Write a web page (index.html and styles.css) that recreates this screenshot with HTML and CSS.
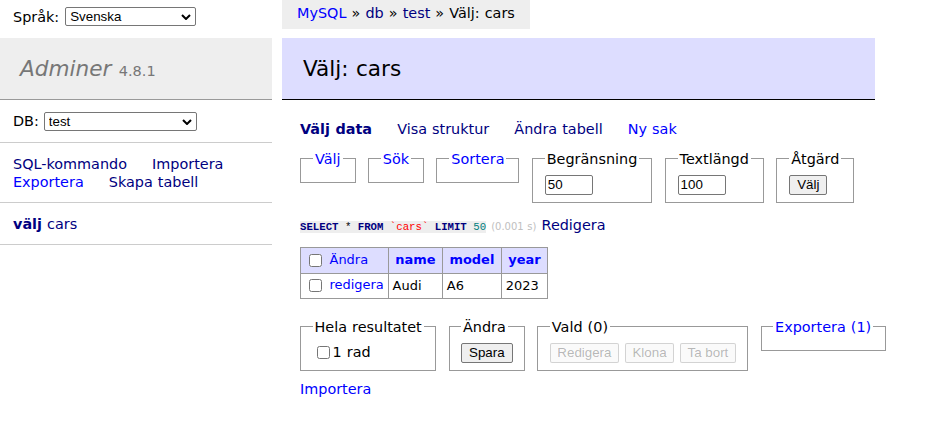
FILE: index.html
```html
<!DOCTYPE html>
<html lang="sv">
<head>
<meta charset="utf-8">
<title>Välj: cars - Adminer</title>
<link rel="stylesheet" href="styles.css">
</head>
<body>
<div class="page">
  <aside class="sidebar">
    <form class="lang">
      <span>Språk:</span>
      <span class="sel lang-select">
        <select><option>Svenska</option></select>
        <svg class="chev" width="10" height="6" viewBox="0 0 10 6"><path d="M1 1 L5 5 L9 1" fill="none" stroke="#000" stroke-width="2"/></svg>
      </span>
    </form>
    <div class="menu">
      <h1><a class="h1link" href="#">Adminer</a> <span class="version">4.8.1</span></h1>
      <form class="dbs">
        <span>DB:</span>
        <span class="sel db-select">
          <select><option>test</option></select>
          <svg class="chev" width="10" height="6" viewBox="0 0 10 6"><path d="M1 1 L5 5 L9 1" fill="none" stroke="#000" stroke-width="2"/></svg>
        </span>
      </form>
      <p class="menu-links"><a class="v" href="#">SQL-kommando</a> <a class="v" href="#">Importera</a> <a href="#">Exportera</a> <a class="v" href="#">Skapa tabell</a></p>
      <ul class="tables">
        <li><a class="v active" href="#">välj</a> <a class="v" href="#">cars</a></li>
      </ul>
    </div>
  </aside>

  <main class="main">
    <div class="crumb-row"><div class="breadcrumb"><a href="#">MySQL</a> » <a class="v" href="#">db</a> » <a class="v" href="#">test</a> » Välj: cars</div></div>
    <h2>Välj: cars</h2>
    <div class="content">
      <p class="tabs"><a class="v active" href="#">Välj data</a> <a class="v" href="#">Visa struktur</a> <a class="v" href="#">Ändra tabell</a> <a href="#">Ny sak</a></p>

      <form class="filters">
        <fieldset><legend><a href="#">Välj</a></legend></fieldset>
        <fieldset><legend><a href="#">Sök</a></legend></fieldset>
        <fieldset><legend><a href="#">Sortera</a></legend></fieldset>
        <fieldset><legend>Begränsning</legend><div><input class="size" type="text" value="50"></div></fieldset>
        <fieldset><legend>Textlängd</legend><div><input class="size" type="text" value="100"></div></fieldset>
        <fieldset><legend>Åtgärd</legend><div><button class="btn" type="button">Välj</button></div></fieldset>
      </form>

      <p class="query"><code class="sql"><b>SELECT</b> * <b>FROM</b> <span class="bac">`cars`</span> <b>LIMIT</b> <span class="num">50</span></code> <span class="time">(0.001 s)</span> <a class="v" href="#">Redigera</a></p>

      <table class="data">
        <thead>
          <tr><td><input type="checkbox"> <a href="#">Ändra</a></td><th><a href="#">name</a></th><th><a href="#">model</a></th><th><a href="#">year</a></th></tr>
        </thead>
        <tbody>
          <tr><td><input type="checkbox"> <a href="#">redigera</a></td><td>Audi</td><td>A6</td><td>2023</td></tr>
        </tbody>
      </table>

      <div class="footer">
        <fieldset><legend>Hela resultatet</legend><label><input type="checkbox">1 rad</label></fieldset>
        <fieldset><legend>Ändra</legend><div><button class="btn" type="button">Spara</button></div></fieldset>
        <fieldset><legend>Vald (0)</legend><div class="btns"><button class="btn small" type="button" disabled>Redigera</button><button class="btn small" type="button" disabled>Klona</button><button class="btn small" type="button" disabled>Ta bort</button></div></fieldset>
        <fieldset><legend><a href="#">Exportera</a> <a href="#">(1)</a></legend></fieldset>
      </div>
      <div class="import"><a href="#">Importera</a></div>
    </div>
  </main>
</div>
</body>
</html>
```

FILE: styles.css
```css
body {
  margin: 0;
  font: 14.4px/1.25 "DejaVu Sans", Verdana, sans-serif;
  word-spacing: 0.5px;
  color: #000;
  background: #fff;
}
a { color: blue; text-decoration: none; }
a.v { color: navy; }
.active { font-weight: bold; }

.page {
  display: grid;
  grid-template-columns: 282px 1fr;
  align-items: start;
}

/* sidebar */
.sidebar { width: 272px; }
.lang {
  display: flex;
  align-items: center;
  gap: 6px;
  height: 33px;
  padding: 0 13px;
  margin: 0 0 5px;
}
.sel { position: relative; display: inline-block; }
.sel select {
  -webkit-appearance: none;
  appearance: none;
  display: block;
  height: 19px;
  margin: 0;
  padding: 0 0 0 4px;
  font: 13.33px "Liberation Sans", Arial, sans-serif;
  word-spacing: normal;
  color: #000;
  background: #fff;
  border: 1px solid #767676;
  border-radius: 2px;
}
.sel .chev {
  position: absolute;
  right: 5px;
  top: 7px;
  pointer-events: none;
}
.lang-select select { width: 131px; }
.db-select select { width: 153px; }

h1 {
  margin: 0;
  padding: 17px 20px;
  font-size: 21.6px;
  line-height: 27px;
  font-weight: normal;
  color: #777;
  background: #eee;
  border-bottom: 1px solid #999;
}
.h1link { color: #777; font-style: italic; }
.version { font-size: 14.5px; line-height: 1; color: #777; }

.dbs {
  display: flex;
  align-items: center;
  gap: 5px;
  height: 42px;
  margin: 0;
  padding: 0 13px;
  border-bottom: 1px solid #ccc;
}
.menu-links {
  margin: 0;
  padding: 11.5px 13px;
  border-bottom: 1px solid #ccc;
}
.menu-links a { margin-right: 20px; white-space: nowrap; }
.tables {
  margin: 0;
  padding: 11.5px 13px;
  list-style: none;
  border-bottom: 1px solid #ccc;
  white-space: nowrap;
}

/* main */
.crumb-row { height: 29px; }
.breadcrumb {
  display: inline-block;
  height: 29px;
  line-height: 26px;
  padding: 0 15px;
  background: #eee;
  white-space: nowrap;
}
h2 {
  width: 593px;
  box-sizing: border-box;
  margin: 9px 0 20px;
  padding: 17px 21px;
  font-size: 21.6px;
  line-height: 27px;
  font-weight: normal;
  color: #000;
  background: #ddf;
  border-bottom: 1px solid #000;
}
.content { padding-left: 18px; }
.tabs { margin: 0; }
.tabs a { margin-right: 20px; white-space: nowrap; }

.filters, .footer { margin: 0; }
fieldset {
  display: inline-block;
  vertical-align: top;
  min-width: 0;
  margin: 11.5px 7.2px 0 0;
  padding: 7.2px 12px;
  border: 1px solid #999;
}
legend { padding: 0 2px; }
.size {
  box-sizing: border-box;
  width: 48px;
  height: 20px;
  margin: 0;
  padding: 1px 2px;
  vertical-align: middle;
  font: 13.33px "Liberation Sans", Arial, sans-serif;
  color: #000;
  border: 1px solid #767676;
  border-radius: 2px;
  background: #fff;
}
.btn {
  box-sizing: border-box;
  height: 20px;
  margin: 0;
  padding: 1px 7px;
  vertical-align: middle;
  font: 13.33px "Liberation Sans", Arial, sans-serif;
  word-spacing: normal;
  color: #000;
  background: #efefef;
  border: 1px solid #767676;
  border-radius: 2px;
}
.btn.small { padding: 1px 6.5px; }
.btns { display: flex; gap: 6px; }
.btn:disabled {
  color: rgba(16, 16, 16, 0.3);
  background: rgba(239, 239, 239, 0.3);
  border-color: rgba(118, 118, 118, 0.3);
}
input[type="checkbox"] { vertical-align: middle; margin: 3px 3px 3px 4px; }

.query { margin: 13px 0 0; }
.sql {
  font: 10.7px "Liberation Mono", "Courier New", monospace;
  word-spacing: normal;
  background: #eee;
}
.sql b { color: navy; }
.sql .bac { color: red; }
.sql .num { color: #007f7f; }
.time { color: silver; font-size: 10px; }

.data {
  margin: 13.5px 0 0;
  border-collapse: collapse;
  font-size: 12.96px;
}
.data td, .data th {
  border: 1px solid #999;
  padding: 2.6px 3.9px;
  text-align: left;
  white-space: pre;
}
.data thead th { text-align: center; padding: 2.6px 6.5px; }
.data thead td, .data thead th { background: #ddf; }

.footer {
  padding: 19px 0 9px;
  white-space: nowrap;
}
.footer fieldset { margin-top: 0; padding-left: 11.5px; padding-right: 11.5px; }
.footer label { white-space: nowrap; }
```
